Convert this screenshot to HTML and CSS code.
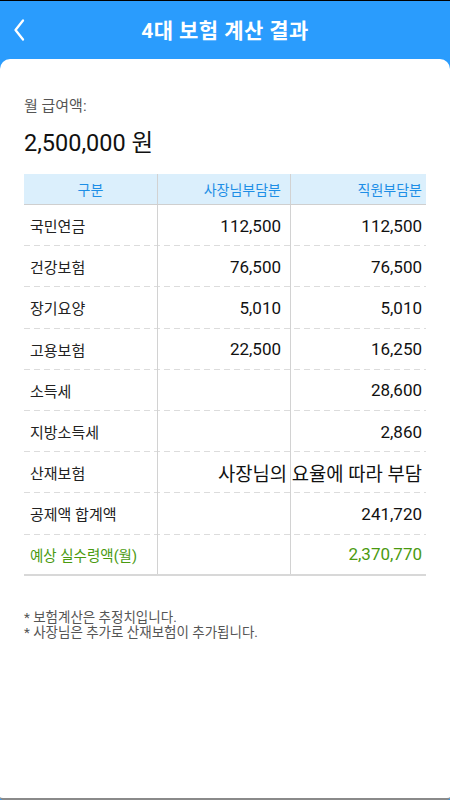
FILE: index.html
```html
<!DOCTYPE html>
<html lang="ko">
<head>
<meta charset="utf-8">
<link rel="stylesheet" href="styles.css">
</head>
<body>
<div class="app">
  <div class="topline"></div>
  <header class="header">
    <svg class="back" width="14" height="24" viewBox="0 0 14 24"><path d="M11 2.5 L3.5 12 L11 21.5" fill="none" stroke="#fff" stroke-width="2.3" stroke-linecap="round" stroke-linejoin="round"/></svg>
    <h1 class="title">4대 보험 계산 결과</h1>
  </header>
  <main class="card">
    <div class="salary-label">월 급여액:</div>
    <div class="salary">2,500,000 원</div>
    <div class="table">
      <div class="row head">
        <div class="c c1 center">구분</div>
        <div class="c c2">사장님부담분</div>
        <div class="c c3">직원부담분</div>
      </div>
      <div class="row"><div class="c c1">국민연금</div><div class="c c2 num">112,500</div><div class="c c3 num">112,500</div></div>
      <div class="row"><div class="c c1">건강보험</div><div class="c c2 num">76,500</div><div class="c c3 num">76,500</div></div>
      <div class="row"><div class="c c1">장기요양</div><div class="c c2 num">5,010</div><div class="c c3 num">5,010</div></div>
      <div class="row"><div class="c c1">고용보험</div><div class="c c2 num">22,500</div><div class="c c3 num">16,250</div></div>
      <div class="row"><div class="c c1">소득세</div><div class="c c2 num"></div><div class="c c3 num">28,600</div></div>
      <div class="row"><div class="c c1">지방소득세</div><div class="c c2 num"></div><div class="c c3 num">2,860</div></div>
      <div class="row"><div class="c c1">산재보험</div><div class="c c2"></div><div class="c c3"></div><div class="span">사장님의 요율에 따라 부담</div></div>
      <div class="row"><div class="c c1">공제액 합계액</div><div class="c c2 num"></div><div class="c c3 num">241,720</div></div>
      <div class="row last green"><div class="c c1">예상 실수령액(월)</div><div class="c c2 num"></div><div class="c c3 num">2,370,770</div></div>
    </div>
    <div class="notes">
      <p>* 보험계산은 추정치입니다.</p>
      <p>* 사장님은 추가로 산재보험이 추가됩니다.</p>
    </div>
  </main>
</div>
</body>
</html>
```
FILE: styles.css
```css
* { box-sizing: border-box; margin: 0; padding: 0; }
html, body { width: 450px; height: 800px; overflow: hidden; }
body {
  font-family: Roboto, "Noto Sans CJK KR", sans-serif;
  background: #2a9cfd;
}
.app { display: flex; flex-direction: column; height: 800px; }
.topline { height: 1px; background: #000; }
.header {
  height: 58px;
  background: #2a9cfd;
  display: flex;
  align-items: center;
  justify-content: center;
  position: relative;
}
.back { position: absolute; left: 12px; top: 17px; }
.title {
  color: #fff;
  font-size: 21px;
  font-weight: 700;
  letter-spacing: 0.4px;
  margin-top: -3px;
}
.card {
  flex: 1;
  background: #fff;
  border-radius: 10px 10px 3px 3px;
  border-bottom: 2px solid #8a8a8a;
  padding: 37px 24px 0;
}
.salary-label {
  font-size: 15px;
  color: #555;
  line-height: 20px;
}
.salary {
  font-size: 23.5px;
  color: #111;
  line-height: 30px;
  margin-top: 12px;
}
.table { margin-top: 16px; width: 402px; }
.row {
  display: flex;
  height: 41.2px;
  position: relative;
  background: repeating-linear-gradient(to right, #dcdcdc 0 6px, transparent 6px 10px) left bottom / 100% 1px no-repeat;
}
.row.head {
  height: 31px;
  background: #dbeffc;
  border-bottom: 1px solid #cfcfcf;
  color: #1d8ee6;
  font-size: 14px;
}
.row.last {
  background: none;
  border-bottom: 2px solid #d8d8d8;
  height: 41.5px;
}
.c {
  display: flex;
  align-items: center;
  justify-content: flex-end;
}
.c1 { width: 134px; justify-content: flex-start; padding-left: 6px; font-size: 15px; color: #222; border-right: 1px solid #d2d2d2; }
.c2 { width: 133px; padding-right: 9px; border-right: 1px solid #d2d2d2; }
.c3 { width: 135px; padding-right: 4px; }
.head .c1 { justify-content: center; color: #1d8ee6; padding-left: 0; font-size: 14px; }
.num { font-size: 17px; color: #111; }
.span {
  position: absolute;
  right: 4px;
  top: 0;
  bottom: 1px;
  display: flex;
  align-items: center;
  font-size: 18.8px;
  color: #111;
}
.green .c1, .green .num { color: #4a9a10; }
.green .c1 { font-size: 14.5px; }
.notes {
  margin-top: 34px;
  font-size: 13.5px;
  color: #555;
  line-height: 15px;
}
```
